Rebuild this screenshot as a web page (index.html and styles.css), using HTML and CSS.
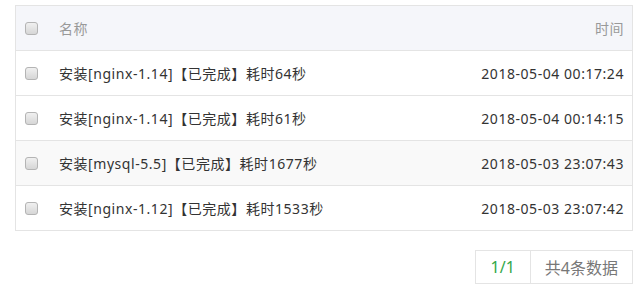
FILE: index.html
```html
<!DOCTYPE html>
<html lang="zh">
<head>
<meta charset="utf-8">
<link rel="stylesheet" href="styles.css">
</head>
<body>
<div class="page">
  <table class="list">
    <thead>
      <tr>
        <th class="c-check"><span class="cb"></span></th>
        <th class="c-name">名称</th>
        <th class="c-time">时间</th>
      </tr>
    </thead>
    <tbody>
      <tr>
        <td class="c-check"><span class="cb"></span></td>
        <td class="c-name">安装[nginx-1.14]【已完成】耗时64秒</td>
        <td class="c-time">2018-05-04 00:17:24</td>
      </tr>
      <tr>
        <td class="c-check"><span class="cb"></span></td>
        <td class="c-name">安装[nginx-1.14]【已完成】耗时61秒</td>
        <td class="c-time">2018-05-04 00:14:15</td>
      </tr>
      <tr class="striped">
        <td class="c-check"><span class="cb"></span></td>
        <td class="c-name">安装[mysql-5.5]【已完成】耗时1677秒</td>
        <td class="c-time">2018-05-03 23:07:43</td>
      </tr>
      <tr>
        <td class="c-check"><span class="cb"></span></td>
        <td class="c-name">安装[nginx-1.12]【已完成】耗时1533秒</td>
        <td class="c-time">2018-05-03 23:07:42</td>
      </tr>
    </tbody>
  </table>
  <div class="pager">
    <span class="pg-current">1/1</span>
    <span class="pg-total">共4条数据</span>
  </div>
</div>
</body>
</html>
```

FILE: styles.css
```css
html, body {
  margin: 0;
  padding: 0;
  background: #fff;
}
body {
  font-family: "Noto Sans", "Noto Sans CJK SC", sans-serif;
  font-size: 14px;
  color: #333;
}
.page {
  padding: 5px 8px 0 15px;
}
.list {
  width: 618px;
  border-collapse: collapse;
  border: 1px solid #e4e4e4;
  letter-spacing: 0.55px;
}
.list th,
.list td {
  height: 44px;
  padding: 0;
  border-bottom: 1px solid #e4e4e4;
  vertical-align: middle;
}
.list thead tr {
  background: #f5f6fa;
}
.list th {
  font-weight: normal;
  color: #999;
}
.list tr.striped {
  background: #f9f9f9;
}
.c-check {
  width: 34px;
  text-align: left;
  padding-left: 9px !important;
}
.c-name {
  text-align: left;
}
.c-time {
  text-align: right;
  padding-right: 8px !important;
}
.cb {
  display: block;
  width: 11px;
  height: 11px;
  border: 1px solid #b4b4b4;
  border-radius: 3px;
  background: linear-gradient(#f0f0f0, #d6d6d6);
}
.pager {
  display: flex;
  justify-content: flex-end;
  margin-top: 19px;
  font-size: 16px;
}
.pager span {
  display: flex;
  align-items: center;
  height: 32px;
  border: 1px solid #e4e4e4;
}
.pg-current {
  color: #32a84a;
  padding: 0 15px;
}
.pg-total {
  color: #777;
  border-left: none !important;
  padding: 0 14px;
}
```
